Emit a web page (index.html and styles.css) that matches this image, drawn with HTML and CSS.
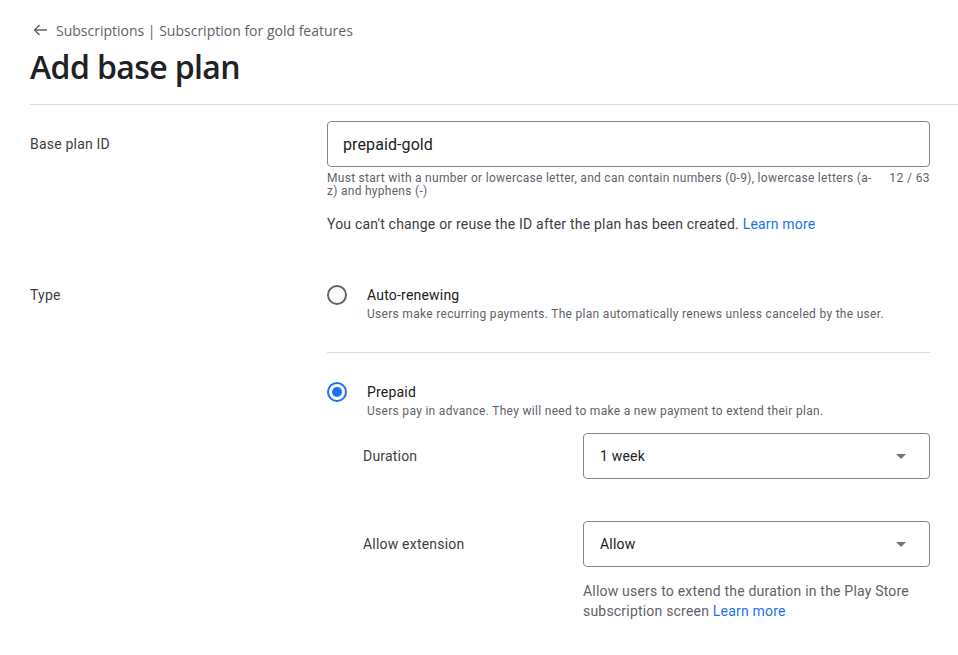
FILE: index.html
```html
<!DOCTYPE html>
<html>
<head>
<meta charset="utf-8">
<link rel="stylesheet" href="styles.css">
</head>
<body>
<div class="page">
  <div class="breadcrumb">
    <svg class="back" width="16" height="16" viewBox="0 0 16 16"><path d="M15 8H2.5M7.5 3L2.5 8l5 5" fill="none" stroke="#5f6368" stroke-width="1.5"/></svg>
    <span>Subscriptions | Subscription for gold features</span>
  </div>
  <h1 class="title">Add base plan</h1>
  <div class="divider-full"></div>

  <div class="row row-id">
    <div class="label label-tall">Base plan ID</div>
    <div class="field">
      <div class="input">prepaid-gold</div>
      <div class="hint">
        <span class="hint-text">Must start with a number or lowercase letter, and can contain numbers (0-9), lowercase letters (a-z) and hyphens (-)</span>
        <span class="counter">12 / 63</span>
      </div>
      <p class="note">You can't change or reuse the ID after the plan has been created. <a class="link">Learn more</a></p>
    </div>
  </div>

  <div class="row row-type">
    <div class="label">Type</div>
    <div class="field">
      <div class="radio-item">
        <span class="radio"></span>
        <div class="radio-body">
          <div class="radio-label">Auto-renewing</div>
          <div class="radio-desc">Users make recurring payments. The plan automatically renews unless canceled by the user.</div>
        </div>
      </div>
      <div class="divider-inner"></div>
      <div class="radio-item">
        <span class="radio checked"></span>
        <div class="radio-body">
          <div class="radio-label">Prepaid</div>
          <div class="radio-desc">Users pay in advance. They will need to make a new payment to extend their plan.</div>
        </div>
      </div>
      <div class="nested">
        <div class="sub-row">
          <div class="sub-label">Duration</div>
          <div class="select"><span>1 week</span><span class="caret"></span></div>
        </div>
        <div class="sub-row sub-row-second">
          <div class="sub-label">Allow extension</div>
          <div class="sub-field">
            <div class="select"><span>Allow</span><span class="caret"></span></div>
            <p class="sub-note">Allow users to extend the duration in the Play Store subscription screen <a class="link">Learn more</a></p>
          </div>
        </div>
      </div>
    </div>
  </div>
</div>
</body>
</html>
```

FILE: styles.css
```css
* { box-sizing: border-box; }
html, body { margin: 0; padding: 0; background: #fff; }
body {
  font-family: Roboto, "Liberation Sans", Arial, sans-serif;
  color: #3c4043;
  font-size: 14px;
  letter-spacing: 0.2px;
}
.page { padding: 20px 0 0 30px; }

.breadcrumb {
  display: flex;
  align-items: center;
  height: 20px;
  font-family: "Open Sans", Roboto, sans-serif;
  font-size: 14px;
  letter-spacing: 0;
  color: #5f6368;
}
.back { margin-left: 2px; margin-right: 8px; }

.title {
  margin: 7px 0 17px;
  font-family: "Open Sans", Roboto, sans-serif;
  font-size: 32px;
  line-height: 40px;
  font-weight: 600;
  color: #202124;
  letter-spacing: -0.6px;
}
.divider-full { height: 1px; background: #dadce0; }

.row { display: grid; grid-template-columns: 297px 603px; }
.row-id { padding-top: 16px; }
.row-type { margin-top: 51px; }

.label { line-height: 20px; color: #3c4043; }
.label-tall { line-height: 46px; }

.input {
  height: 46px;
  border: 1px solid #80868b;
  border-radius: 4px;
  padding: 0 15px;
  display: flex;
  align-items: center;
  font-size: 16px;
  letter-spacing: 0.1px;
  color: #202124;
}
.hint {
  display: flex;
  margin-top: 5px;
  font-size: 12px;
  letter-spacing: 0.28px;
  line-height: 13px;
  color: #5f6368;
}
.hint-text { flex: 1; padding-right: 14px; }
.counter { white-space: nowrap; letter-spacing: 0.4px; }

.note { margin: 16px 0 0; line-height: 20px; color: #3c4043; }
.link { color: #1a73e8; text-decoration: none; }

.radio-item { display: flex; gap: 20px; }
.radio {
  flex: none;
  width: 20px;
  height: 20px;
  border: 2px solid #5f6368;
  border-radius: 50%;
  display: flex;
  align-items: center;
  justify-content: center;
}
.radio.checked { border-color: #1a73e8; }
.radio.checked::after {
  content: "";
  width: 10px;
  height: 10px;
  border-radius: 50%;
  background: #1a73e8;
}
.radio-label { line-height: 20px; color: #202124; }
.radio-desc { margin-top: 1px; font-size: 12px; letter-spacing: 0.3px; line-height: 16px; color: #5f6368; }
.divider-inner { height: 1px; background: #dadce0; margin: 30px 0 29px; }

.nested { padding-left: 36px; margin-top: 14px; }
.sub-row { display: grid; grid-template-columns: 220px 347px; }
.sub-row-second { margin-top: 42px; }
.sub-label { line-height: 46px; color: #3c4043; }
.select {
  height: 46px;
  border: 1px solid #80868b;
  border-radius: 4px;
  padding: 0 23px 0 16px;
  display: flex;
  align-items: center;
  justify-content: space-between;
  color: #202124;
}
.caret {
  width: 0; height: 0;
  border-left: 5px solid transparent;
  border-right: 5px solid transparent;
  border-top: 5px solid #757575;
}
.sub-note { margin: 14px 0 0; line-height: 20px; color: #5f6368; }
```
